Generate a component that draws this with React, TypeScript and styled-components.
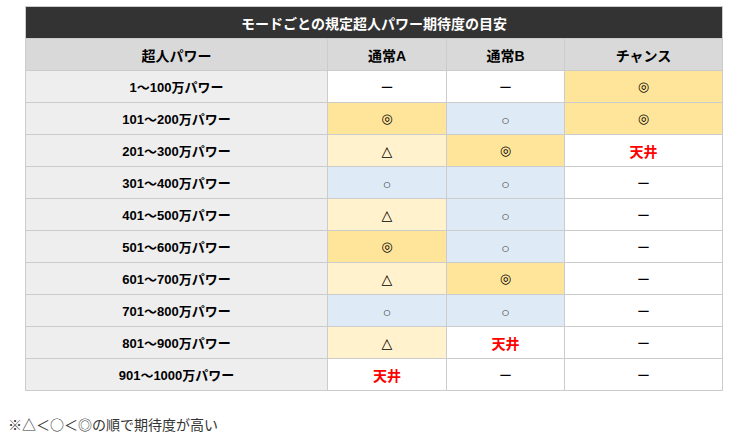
import React from "react";
import styled, { createGlobalStyle } from "styled-components";

const Global = createGlobalStyle`
  html, body { margin: 0; padding: 0; background: #fff; }
  body { font-family: "Liberation Sans", "Noto Sans CJK JP", sans-serif; color: #000; }
`;

const Page = styled.div`
  padding: 6px 8px 0 8px;
`;

const Table = styled.table`
  border-collapse: collapse;
  table-layout: fixed;
  width: 697px;
  margin-left: 17px;
  font-size: 13px;
`;

const Col = styled.col<{ $w: number }>`
  width: ${(p) => p.$w}px;
`;

const TitleCell = styled.th`
  background: #333333;
  color: #fff;
  font-weight: bold;
  font-size: 14px;
  height: 31px;
  border: 1px solid #cccccc;
  text-align: center;
  padding: 0;
`;

const HeadCell = styled.th`
  background: #d9d9d9;
  font-weight: bold;
  font-size: 14px;
  height: 31px;
  border: 1px solid #cccccc;
  text-align: center;
  padding: 0;
`;

const LabelCell = styled.td`
  background: #eeeeee;
  font-weight: bold;
  height: 31px;
  border: 1px solid #cccccc;
  text-align: center;
  padding: 0;
`;

type Tone = "strong" | "light" | "blue" | "none";
const toneBg: Record<Tone, string> = {
  strong: "#ffe599",
  light: "#fff2cc",
  blue: "#deeaf6",
  none: "#ffffff",
};

const ValueCell = styled.td<{ $tone: Tone }>`
  background: ${(p) => toneBg[p.$tone]};
  height: 31px;
  border: 1px solid #cccccc;
  text-align: center;
  padding: 0;
`;

const Red = styled.span`
  color: #ff0000;
  font-weight: bold;
  font-size: 14px;
`;

const Sym = styled.span<{ $size: number; $bold?: boolean }>`
  font-size: ${(p) => p.$size}px;
  font-weight: ${(p) => (p.$bold ? "bold" : "normal")};
  font-family: "DejaVu Sans", "Noto Sans CJK JP", sans-serif;
`;

const Note = styled.p`
  margin: 23px 0 0 0;
  font-size: 14px;
  color: #333;
  font-family: "Noto Sans CJK JP", sans-serif;
`;

type V = "◎" | "○" | "△" | "ー" | "天井";

const cellTone = (v: V): Tone =>
  v === "◎" ? "strong" : v === "△" ? "light" : v === "○" ? "blue" : "none";

const Value = ({ v }: { v: V }) => {
  if (v === "天井") return <Red>天井</Red>;
  if (v === "◎") return <Sym $size={13}>◎</Sym>;
  if (v === "○") return <Sym $size={8} $bold>○</Sym>;
  if (v === "△") return <Sym $size={14}>△</Sym>;
  return <Sym $size={13}>ー</Sym>;
};

const rows: [string, V, V, V][] = [
  ["1～100万パワー", "ー", "ー", "◎"],
  ["101～200万パワー", "◎", "○", "◎"],
  ["201～300万パワー", "△", "◎", "天井"],
  ["301～400万パワー", "○", "○", "ー"],
  ["401～500万パワー", "△", "○", "ー"],
  ["501～600万パワー", "◎", "○", "ー"],
  ["601～700万パワー", "△", "◎", "ー"],
  ["701～800万パワー", "○", "○", "ー"],
  ["801～900万パワー", "△", "天井", "ー"],
  ["901～1000万パワー", "天井", "ー", "ー"],
];

export default function App() {
  return (
    <Page>
      <Global />
      <Table>
        <colgroup>
          <Col $w={302} />
          <Col $w={119} />
          <Col $w={118} />
          <Col $w={158} />
        </colgroup>
        <thead>
          <tr>
            <TitleCell colSpan={4}>モードごとの規定超人パワー期待度の目安</TitleCell>
          </tr>
          <tr>
            <HeadCell>超人パワー</HeadCell>
            <HeadCell>通常A</HeadCell>
            <HeadCell>通常B</HeadCell>
            <HeadCell>チャンス</HeadCell>
          </tr>
        </thead>
        <tbody>
          {rows.map(([label, a, b, c]) => (
            <tr key={label}>
              <LabelCell>{label}</LabelCell>
              {[a, b, c].map((v, i) => (
                <ValueCell key={i} $tone={cellTone(v)}>
                  <Value v={v} />
                </ValueCell>
              ))}
            </tr>
          ))}
        </tbody>
      </Table>
      <Note>※△＜○＜◎の順で期待度が高い</Note>
    </Page>
  );
}
